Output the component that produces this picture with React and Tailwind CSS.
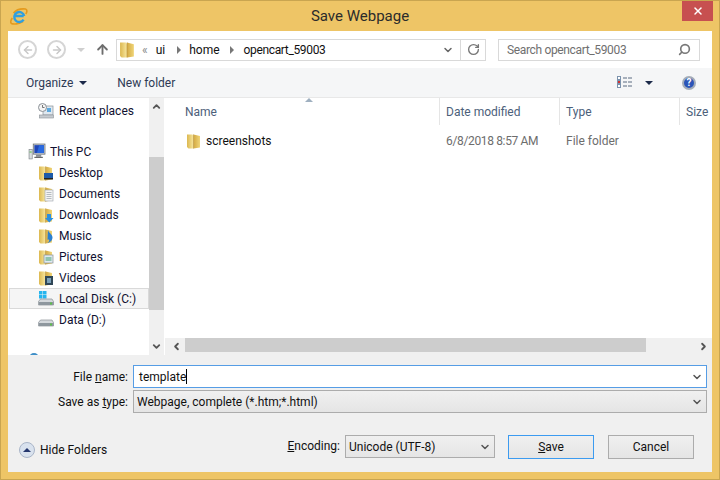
import { ChevronDown, ChevronUp, ChevronLeft, ChevronRight, ArrowLeft, ArrowRight, ArrowUp, RotateCw, Search, X } from "lucide-react";

const font = { fontFamily: 'Roboto, "Open Sans", sans-serif' };

function IeIcon() {
  return (
    <svg width="18" height="17" viewBox="0 0 18 17">
      <path d="M3.5 5C6 2 11 .5 15.5 1c2 .6 1.6 3 .3 5M13 13.5c-4 2.4-9.5 3.2-11.5 2-1.4-1-.6-3.4.8-5.5" fill="none" stroke="#e59a1c" strokeWidth="1.6" />
      <path d="M4.5 8h9.2M13.6 11.6a5 5 0 1 1 .6-3.6" fill="none" stroke="#2f9fe0" strokeWidth="2.4" />
    </svg>
  );
}

// folder with an optional picture on top of it
function FolderIcon({ children, size = 16 }) {
  return (
    <svg width={size} height={size} viewBox="0 0 16 16" className="shrink-0">
      <defs>
        <linearGradient id="folderLeft" x1="0" x2="1" y1="0" y2="0">
          <stop offset="0" stopColor="#dcb850" />
          <stop offset="1" stopColor="#f8e79f" />
        </linearGradient>
        <linearGradient id="folderRight" x1="0" x2="1" y1="0" y2="0">
          <stop offset="0" stopColor="#d3a942" />
          <stop offset="1" stopColor="#f0d578" />
        </linearGradient>
      </defs>
      <path d="M1 1.5h5.5l1 1.5v12.5H2.5L1 14z" fill="url(#folderLeft)" />
      <path d="M7.5 1.5l6.5 1.5v11.5l-6.5 1z" fill="url(#folderRight)" />
      <path d="M7.5 1.5v14" stroke="#b8923a" strokeWidth="0.6" />
      {children}
    </svg>
  );
}

function DriveIcon({ win }) {
  return (
    <svg width="17" height="16" viewBox="0 0 17 16" className="shrink-0">
      {win && (
        <g fill="#25b5ee">
          <rect x="1" y="0" width="3.5" height="3.5" />
          <rect x="5" y="0" width="3.5" height="3.5" />
          <rect x="1" y="4" width="3.5" height="3.5" />
          <rect x="5" y="4" width="3.5" height="3.5" />
        </g>
      )}
      <path d="M2.5 8h11.5l1.5 2.5v3.5h-15v-3.5z" fill="#d4d8dc" stroke="#8a9096" strokeWidth="0.7" />
      <rect x="1" y="11" width="14.5" height="3" fill="#8e979e" />
      <rect x="12" y="11.5" width="2" height="2" fill="#5cc04a" />
    </svg>
  );
}

function RecentIcon() {
  return (
    <svg width="17" height="16" viewBox="0 0 17 16" className="shrink-0">
      <rect x="5" y="3" width="10" height="9" fill="#dfe8f0" stroke="#8a9096" strokeWidth="0.7" />
      <rect x="9" y="5" width="4" height="4" fill="#5da9de" />
      <circle cx="4.5" cy="4.5" r="4" fill="#f4f4f4" stroke="#8a9096" />
      <path d="M4.5 2v2.5h2" fill="none" stroke="#555" strokeWidth="0.8" />
      <rect x="1.5" y="12" width="14" height="3" fill="#c6cbd0" stroke="#8a9096" strokeWidth="0.6" />
    </svg>
  );
}

function PcIcon() {
  return (
    <svg width="18" height="17" viewBox="0 0 16 16" className="shrink-0">
      <rect x="0.5" y="6" width="3" height="9" fill="#d8dcdf" stroke="#7d8388" strokeWidth="0.6" />
      <rect x="1" y="8" width="2" height="1" fill="#5cc04a" />
      <rect x="4.5" y="1" width="11" height="9.5" fill="#d5d9dd" stroke="#6d7378" strokeWidth="0.8" />
      <rect x="5.5" y="2" width="9" height="7.5" fill="#1f46b8" />
      <path d="M10 2h4.5v7.5H8z" fill="#2a6ae0" />
      <rect x="7" y="11" width="5" height="2" fill="#8a9096" />
      <rect x="5.5" y="13" width="8" height="1" fill="#555" />
    </svg>
  );
}

function ViewIcon() {
  return (
    <svg width="16" height="13" viewBox="0 0 16 13">
      <g fill="#fff" stroke="#7c93ad">
        <rect x="0.5" y="0.5" width="3" height="3" />
        <rect x="0.5" y="4.5" width="3" height="3" />
        <rect x="0.5" y="8.5" width="3" height="3" />
      </g>
      <rect x="1" y="5" width="2" height="2" fill="#d03030" />
      <path d="M6 2h4M11 2h4M6 6h4M11 6h4M6 10h4M11 10h4" stroke="#5a6a80" strokeWidth="1" />
    </svg>
  );
}

function TreeRow({ icon, label, indent = "pl-[29px]", selected }) {
  return (
    <div className={`h-[21px] flex items-center gap-[4px] text-[12px] text-[#101030] ${indent} ${selected ? "bg-[#f5f5f5] border border-[#d9d9d9] ml-px" : ""}`}>
      {icon}
      <span className="whitespace-nowrap">{label}</span>
    </div>
  );
}

function ColHead({ label, width, border = true }) {
  return (
    <div className={`h-[27px] flex items-center pl-[6px] text-[12px] text-[#4c607a] shrink-0 ${width} ${border ? "border-r border-[#e5e5e5]" : ""}`}>
      {label}
    </div>
  );
}

export default function App() {
  return (
    <div style={font} className="w-[720px] h-[480px] bg-[#eec566] border border-[#c9a550] flex flex-col overflow-hidden text-[12px]">
      {/* title bar */}
      <div className="h-[30px] shrink-0 flex items-start relative">
        <div className="ml-[9px] mt-[7px]"><IeIcon /></div>
        <div className="flex-1 mr-[27px] text-center text-[15px] leading-[30px] text-[#2b2b2b]">Save Webpage</div>
        <div className="absolute right-[6px] top-0 w-[31px] h-[20px] bg-[#c75050] flex items-center justify-center">
          <X size={12} strokeWidth={3} color="#fff" />
        </div>
      </div>

      {/* dialog */}
      <div className="mx-[7px] mb-[7px] flex-1 min-h-0 flex flex-col bg-[#f0f0f0]">
        {/* nav row */}
        <div className="h-[37px] shrink-0 bg-white flex items-center pl-[10px] pr-[12px]">
          <div className="w-[19px] h-[19px] rounded-full border-2 border-[#d5d5d5] flex items-center justify-center">
            <ArrowLeft size={12} strokeWidth={3} color="#c8c8c8" />
          </div>
          <div className="ml-[10px] w-[19px] h-[19px] rounded-full border-2 border-[#d5d5d5] flex items-center justify-center">
            <ArrowRight size={12} strokeWidth={3} color="#c8c8c8" />
          </div>
          <div className="ml-[11px] w-0 h-0 border-x-[4px] border-x-transparent border-t-[4px] border-t-[#cfcfcf]" />
          <div className="ml-[10px]"><ArrowUp size={15} strokeWidth={3} color="#6d6d6d" /></div>
          <div className="ml-[6px] w-[370px] h-[22px] border border-[#d9d9d9] flex items-center">
            <div className="ml-[2px]"><FolderIcon size={17} /></div>
            <span className="ml-[6px] text-[#8a8a8a] text-[12px] leading-none">«</span>
            <span className="ml-[8px] text-[#111]">ui</span>
            <span className="ml-[12px] w-0 h-0 border-y-[4px] border-y-transparent border-l-[4px] border-l-[#777]" />
            <span className="ml-[8px] text-[#111]">home</span>
            <span className="ml-[10px] w-0 h-0 border-y-[4px] border-y-transparent border-l-[4px] border-l-[#777]" />
            <span className="ml-[10px] text-[#111] tracking-[-0.35px]">opencart_59003</span>
            <div className="ml-auto w-[24px] flex justify-center"><ChevronDown size={12} strokeWidth={3} color="#666" /></div>
            <div className="w-[25px] h-full border-l border-[#d9d9d9] flex items-center justify-center">
              <RotateCw size={13} strokeWidth={2.5} color="#777" />
            </div>
          </div>
          <div className="ml-[12px] w-[202px] h-[22px] border border-[#d9d9d9] flex items-center pl-[8px] pr-[8px] text-[#6f6f6f]">
            <span className="tracking-[-0.35px]">Search opencart_59003</span>
            <Search size={13} strokeWidth={3} color="#777" className="ml-auto -scale-x-100" />
          </div>
        </div>

        {/* toolbar */}
        <div className="h-[30px] shrink-0 bg-[#f5f6f7] border-b border-[#e8e8e8] flex items-center pl-[18px] pr-[16px] text-[#2e3a55]">
          <span>Organize</span>
          <span className="ml-[6px] w-0 h-0 border-x-[4px] border-x-transparent border-t-[4px] border-t-[#1c2a4a]" />
          <span className="ml-[30px]">New folder</span>
          <div className="ml-auto"><ViewIcon /></div>
          <span className="ml-[12px] w-0 h-0 border-x-[4px] border-x-transparent border-t-[4px] border-t-[#1c2a4a]" />
          <div className="ml-[29px] w-[14px] h-[14px] rounded-full bg-[#2b55b8] border-2 border-[#a3acb8] flex items-center justify-center text-white text-[10px] font-bold leading-none">?</div>
        </div>

        {/* body */}
        <div className="h-[257px] shrink-0 flex bg-white">
          {/* nav tree */}
          <div className="w-[141px] shrink-0 overflow-hidden pt-[2px]">
            <TreeRow icon={<RecentIcon />} label="Recent places" indent="pl-[30px]" />
            <div className="h-[20px]" />
            <TreeRow icon={<PcIcon />} label="This PC" indent="pl-[20px]" />
            <TreeRow icon={<FolderIcon><rect x="6" y="8" width="9" height="6" fill="#1d5aa8" /><rect x="6" y="13" width="9" height="1.5" fill="#222" /></FolderIcon>} label="Desktop" indent="pl-[30px] !gap-[5px]" />
            <TreeRow icon={<FolderIcon><rect x="7" y="4" width="8" height="11" fill="#f4f4f4" stroke="#9aa2aa" strokeWidth="0.6" /><path d="M8.5 6.5h5M8.5 8.5h5M8.5 10.5h5M8.5 12.5h5" stroke="#9aa2aa" strokeWidth="0.7" /></FolderIcon>} label="Documents" indent="pl-[30px] !gap-[5px]" />
            <TreeRow icon={<FolderIcon><path d="M9 7h4v4h2.5l-4.2 4.5L7 11h2z" fill="#2a8fe0" /></FolderIcon>} label="Downloads" indent="pl-[30px] !gap-[5px]" />
            <TreeRow icon={<FolderIcon><path d="M10 2c.5 3 4.5 4 4.5 7.5 0 3-2.5 5-5 5.5 1.5-1 2.5-3 1-3.5-1 0-1 .5-1 .5z" fill="#2a7fd0" /></FolderIcon>} label="Music" indent="pl-[30px] !gap-[5px]" />
            <TreeRow icon={<FolderIcon><rect x="6" y="6" width="9" height="8" fill="#dfeaf0" stroke="#8a9096" strokeWidth="0.7" /><rect x="7.5" y="8" width="6" height="4" fill="#8fc4b0" /></FolderIcon>} label="Pictures" indent="pl-[30px] !gap-[5px]" />
            <TreeRow icon={<FolderIcon><rect x="7" y="6" width="8" height="9" fill="#2f4656" /><rect x="9" y="8" width="4" height="5" fill="#7aa0b8" /></FolderIcon>} label="Videos" indent="pl-[30px] !gap-[5px]" />
            <TreeRow icon={<DriveIcon win />} label="Local Disk (C:)" indent="pl-[28px]" selected />
            <TreeRow icon={<DriveIcon />} label="Data (D:)" indent="pl-[30px]" />
            <div className="h-[23px]" />
            <div className="pl-[21px]"><div className="w-[10px] h-[10px] rounded-full bg-[#3f8fc8]" /></div>
          </div>

          {/* tree scrollbar */}
          <div className="w-[15px] shrink-0 bg-[#f0f0f0] flex flex-col">
            <div className="h-[17px] flex items-center justify-center"><ChevronUp size={11} strokeWidth={4} color="#555" /></div>
            <div className="h-[42px]" />
            <div className="h-[153px] bg-[#cdcdcd]" />
            <div className="flex-1" />
            <div className="h-[17px] flex items-center justify-center"><ChevronDown size={11} strokeWidth={4} color="#555" /></div>
          </div>

          {/* file list */}
          <div className="flex-1 min-w-0 flex flex-col pl-px">
            <div className="flex h-[27px] relative">
              <ColHead label="Name" width="w-[275px] pl-[20px]" />
              <ColHead label="Date modified" width="w-[120px]" />
              <ColHead label="Type" width="w-[120px]" />
              <ColHead label="Size" width="w-[32px]" border={false} />
              <span className="absolute left-[140px] top-0 w-0 h-0 border-x-[4px] border-x-transparent border-b-[4px] border-b-[#9fb0c0]" />
            </div>
            <div className="mt-[5px] h-[22px] flex items-center">
              <div className="w-[275px] flex items-center pl-[21px] gap-[4px]">
                <FolderIcon />
                <span className="text-[#111]">screenshots</span>
              </div>
              <span className="w-[120px] pl-[6px] text-[#6d6d6d] tracking-[-0.35px]">6/8/2018 8:57 AM</span>
              <span className="pl-[6px] text-[#6d6d6d]">File folder</span>
            </div>
            <div className="flex-1" />
            {/* horizontal scrollbar */}
            <div className="h-[17px] flex bg-[#f0f0f0] items-center">
              <div className="ml-[3px] w-[17px] flex justify-center"><ChevronLeft size={11} strokeWidth={4} color="#555" /></div>
              <div className="w-[461px] h-[14px] -mt-[3px] bg-[#cdcdcd]" />
              <div className="flex-1" />
              <div className="w-[17px] flex justify-center"><ChevronRight size={11} strokeWidth={4} color="#555" /></div>
            </div>
          </div>
        </div>

        {/* file name fields */}
        <div className="mt-[10px] flex items-center pr-[5px] h-[23px]">
          <span className="w-[120px] text-right text-[#111]">File <u>n</u>ame:</span>
          <div className="ml-[5px] flex-1 h-[23px] bg-white border border-[#569de5] flex items-center pl-[5px] pr-[2px]">
            <span className="text-[#111]">template</span>
            <span className="w-px h-[15px] bg-black" />
            <ChevronDown size={12} strokeWidth={3} color="#555" className="ml-auto mr-[1px]" />
          </div>
        </div>
        <div className="mt-[2px] flex items-center pr-[5px] h-[23px]">
          <span className="w-[120px] text-right text-[#111]">Save as <u>t</u>ype:</span>
          <div className="ml-[5px] flex-1 h-[23px] bg-gradient-to-b from-[#f0f0f0] to-[#e5e5e5] border border-[#acacac] flex items-center pl-[3px] pr-[2px]">
            <span className="text-[#111]">Webpage, complete (*.htm;*.html)</span>
            <ChevronDown size={12} strokeWidth={3} color="#555" className="ml-auto mr-[1px]" />
          </div>
        </div>

        {/* bottom buttons */}
        <div className="mt-[22px] flex items-start pl-[11px] pr-[18px]">
          <div className="flex items-center mt-[3px] h-[24px]">
            <div className="w-[16px] h-[16px] rounded-full bg-[#d9e2ee] border border-[#a9b5c8] flex items-center justify-center">
              <span className="w-0 h-0 border-x-[4px] border-x-transparent border-b-[4px] border-b-[#24366e]" />
            </div>
            <span className="ml-[5px] text-[#111]">Hide Folders</span>
          </div>
          <span className="ml-auto leading-[23px] text-[#111]"><u>E</u>ncoding:</span>
          <div className="ml-[5px] w-[150px] h-[23px] bg-gradient-to-b from-[#f0f0f0] to-[#e5e5e5] border border-[#acacac] flex items-center pl-[3px] pr-[2px]">
            <span className="text-[#111]">Unicode (UTF-8)</span>
            <ChevronDown size={12} strokeWidth={3} color="#555" className="ml-auto mr-[1px]" />
          </div>
          <div className="ml-[13px] w-[86px] h-[24px] bg-gradient-to-b from-[#f0f0f0] to-[#e5e5e5] border border-[#3c9bf0] flex items-center justify-center text-[#111]"><span><u>S</u>ave</span></div>
          <div className="ml-[14px] w-[86px] h-[24px] bg-gradient-to-b from-[#f0f0f0] to-[#e5e5e5] border border-[#acacac] flex items-center justify-center text-[#111]">Cancel</div>
        </div>
      </div>
    </div>
  );
}
